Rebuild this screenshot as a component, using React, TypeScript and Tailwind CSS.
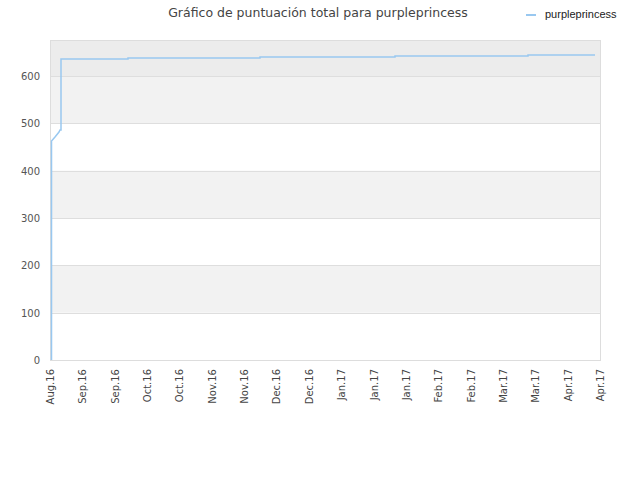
const labels = ["Aug.16","Sep.16","Sep.16","Oct.16","Oct.16","Nov.16","Nov.16","Dec.16","Dec.16","Jan.17","Jan.17","Jan.17","Feb.17","Feb.17","Mar.17","Mar.17","Apr.17","Apr.17"];

const yOf = (v: number) => 360 - v * 0.4733;

export default function App() {
  const ticks = [0, 100, 200, 300, 400, 500, 600];
  return (
    <div className="w-[640px] h-[480px] bg-white" style={{ fontFamily: "'DejaVu Sans', sans-serif" }}>
      <svg width="640" height="480" className="block">
        <text x="318" y="17" textAnchor="middle" fontSize="12.5" fill="#444">Gráfico de puntuación total para purpleprincess</text>
        <line x1="526" y1="15" x2="536" y2="15" stroke="#99c8f0" strokeWidth="2" />
        <text x="545" y="18" fontSize="11" fill="#222" fontFamily="'Liberation Sans', sans-serif">purpleprincess</text>
        <rect x="50.5" y="40.5" width="550" height="320" fill="#fff" stroke="#ddd" />
        <rect x="51" y="41" width="549" height={yOf(600) - 41} fill="#ececec" />
        <rect x="51" y={yOf(600)} width="549" height={yOf(500) - yOf(600)} fill="#f2f2f2" />
        <rect x="51" y={yOf(400)} width="549" height={yOf(300) - yOf(400)} fill="#f2f2f2" />
        <rect x="51" y={yOf(200)} width="549" height={yOf(100) - yOf(200)} fill="#f2f2f2" />
        {ticks.map((t) => (
          <g key={t}>
            {t > 0 && <line x1="51" x2="600" y1={Math.round(yOf(t)) + 0.5} y2={Math.round(yOf(t)) + 0.5} stroke="#dedede" />}
            <text x="40" y={yOf(t) + 4} textAnchor="end" fontSize="10" fill="#555">{t}</text>
          </g>
        ))}
        <polyline
          fill="none"
          stroke="#99c8f0"
          strokeWidth="1.5"
          points="51.5,360 51.5,141 55,137 59,132 60,130 61,130 61,59 128,59 128,58 260,58 260,57 395,57 395,56 528,56 528,55 595,55"
        />
        {labels.map((l, i) => {
          const x = 50 + i * (550 / 17);
          return (
            <text key={i} transform={`translate(${x + 4},369) rotate(-90)`} textAnchor="end" fontSize="10" fill="#444">{l}</text>
          );
        })}
      </svg>
    </div>
  );
}
